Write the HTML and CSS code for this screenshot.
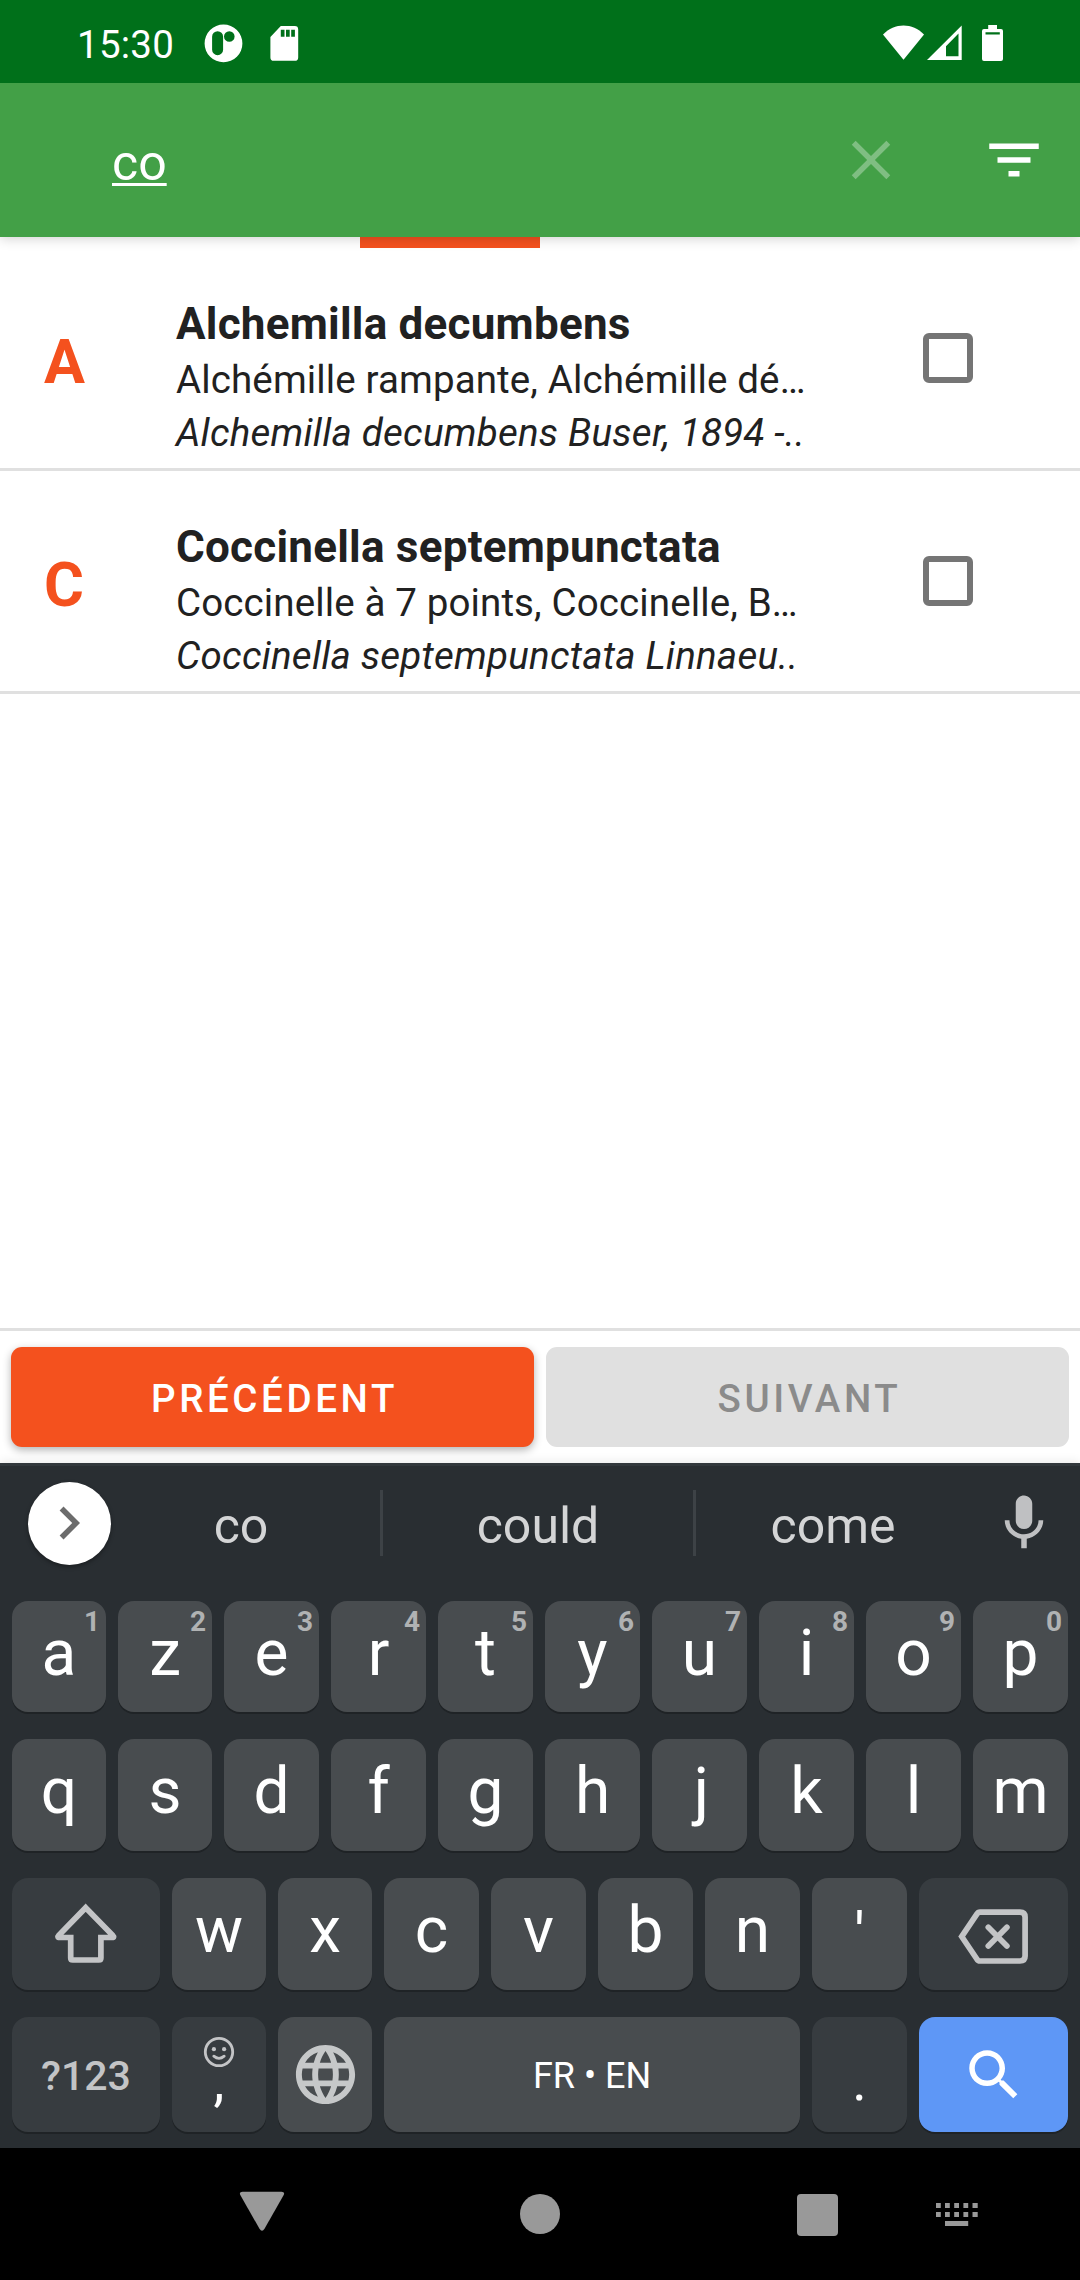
FILE: index.html
```html
<!DOCTYPE html>
<html lang="fr">
<head>
<meta charset="utf-8">
<title>Recherche de taxons</title>
<link rel="stylesheet" href="styles.css">
</head>
<body>
<div class="screen">
  <header class="status">
    <span class="clock">15:30</span>
    <svg class="status-left" width="100" height="40" viewBox="200 24 100 40" fill="#fff">
      <path fill-rule="evenodd" d="M223.5 24.5a18.9 18.9 0 1 0 0 37.8a18.9 18.9 0 0 0 0-37.8zM217.6 31.2a5.5 5.5 0 0 1 5.5 5.5v13a5.5 5.5 0 0 1-11 0v-13a5.5 5.5 0 0 1 5.5-5.5zM229.3 31.2a5.3 5.3 0 1 1 0 10.6a5.3 5.3 0 0 1 0-10.6z"/>
      <path fill-rule="evenodd" d="M280.8 26h14a3.400 3.400 0 0 1 3.400 3.400v28a3.400 3.400 0 0 1-3.400 3.400h-21a3.400 3.400 0 0 1-3.400-3.400v-20.500zM280.800 29.800v7h3.700v-7zM286 29.800v7h3.700v-7zM291.200 29.800v7h3.700v-7z"/>
    </svg>
    <svg class="status-right" width="124" height="40" viewBox="882 24 124 40" fill="#fff">
      <path d="M883 34.500C894.500 22.500 912.500 22.500 924 34.500L903.500 59.700z"/>
      <path fill-rule="evenodd" d="M961.700 25.500V60H927zM958.500 33.500L946 46.200V56.200H958.500z"/>
      <path fill-rule="evenodd" d="M988.200 25h8.800v4h4a2 2 0 0 1 2 2v28a2 2 0 0 1-2 2h-17a2 2 0 0 1-2-2V31a2 2 0 0 1 2-2h4.200zM985.500 32.300v2.200h14.300v-2.200z"/>
    </svg>
  </header>

  <div class="toolbar">
    <span class="query">co</span>
    <svg class="clear" width="66" height="66" viewBox="0 0 24 24"><path d="M19 6.410L17.590 5 12 10.590 6.410 5 5 6.410 10.590 12 5 17.590 6.410 19 12 13.410 17.590 19 19 17.590 13.410 12z"/></svg>
    <svg class="filter" width="66" height="66" viewBox="0 0 24 24"><path d="M10 18h4v-2h-4v2zM3 6v2h18V6H3zm3 7h12v-2H6v2z"/></svg>
  </div>

  <div class="progress"><div class="progress-bar"></div></div>

  <main class="list">
    <article class="item">
      <div class="initial">A</div>
      <div class="texts">
        <div class="name">Alchemilla decumbens</div>
        <div class="common">Alchémille rampante, Alchémille dé…</div>
        <div class="latin">Alchemilla decumbens Buser, 1894 -..</div>
      </div>
      <div class="check"></div>
    </article>
    <article class="item">
      <div class="initial">C</div>
      <div class="texts">
        <div class="name">Coccinella septempunctata</div>
        <div class="common">Coccinelle à 7 points, Coccinelle, B…</div>
        <div class="latin">Coccinella septempunctata Linnaeu..</div>
      </div>
      <div class="check"></div>
    </article>
  </main>

  <div class="actions">
    <div class="btn primary">PRÉCÉDENT</div>
    <div class="btn disabled">SUIVANT</div>
  </div>

  <section class="keyboard">
    <div class="suggestions">
      <div class="expand"><svg width="66" height="66" viewBox="0 0 24 24"><path d="M10 6L8.590 7.410 13.170 12l-4.580 4.590L10 18l6-6z"/></svg></div>
      <div class="word first">co</div>
      <div class="sep"></div>
      <div class="word">could</div>
      <div class="sep"></div>
      <div class="word">come</div>
      <svg class="mic" width="66" height="66" viewBox="0 0 24 24"><path d="M12 14.200c1.660 0 3-1.340 3-3V5c0-1.660-1.340-3-3-3S9 3.340 9 5v6.200c0 1.660 1.340 3 3 3zM17.300 11c0 3-2.540 5.100-5.300 5.100S6.700 14 6.700 11H5c0 3.410 2.720 6.230 6 6.720V21.200h2v-3.480c3.280-.48 6-3.300 6-6.720h-1.700z"/></svg>
    </div>
    <div class="row">
      <div class="key slim">a<span class="hint">1</span></div>
      <div class="key slim">z<span class="hint">2</span></div>
      <div class="key">e<span class="hint">3</span></div>
      <div class="key">r<span class="hint">4</span></div>
      <div class="key">t<span class="hint">5</span></div>
      <div class="key">y<span class="hint">6</span></div>
      <div class="key">u<span class="hint">7</span></div>
      <div class="key">i<span class="hint">8</span></div>
      <div class="key">o<span class="hint">9</span></div>
      <div class="key">p<span class="hint">0</span></div>
    </div>
    <div class="row">
      <div class="key slim">q</div><div class="key slim">s</div><div class="key">d</div><div class="key">f</div><div class="key">g</div><div class="key">h</div><div class="key nudge">j</div><div class="key">k</div><div class="key">l</div><div class="key">m</div>
    </div>
    <div class="row">
      <div class="key wide dark icon">
        <svg width="70" height="70" viewBox="51 1899 70 70" fill="none" stroke="#c3c4c6" stroke-width="5.700"><path d="M85.700 1907.700L112.600 1935.200Q114.800 1937.500 112 1937.500H100.900V1958Q100.900 1960 98.900 1960H72.700Q70.700 1960 70.700 1958V1937.500H59.600Q56.800 1937.500 58.900 1935.200Z"/></svg>
      </div>
      <div class="key slim">w</div><div class="key slim">x</div><div class="key">c</div><div class="key">v</div><div class="key">b</div><div class="key">n</div>
      <div class="key apos">'</div>
      <div class="key wider dark icon">
        <svg width="76" height="66" viewBox="955.500 1901 76 66" fill="none" stroke="#c3c4c6" stroke-width="5.700"><path d="M979.500 1912.200H1019.500Q1024.600 1912.200 1024.600 1917.200V1956Q1024.600 1961 1019.500 1961H979.500Q977.500 1961 976.300 1959L961.200 1936.600L976.300 1914.200Q977.500 1912.200 979.500 1912.200Z"/><path stroke-linecap="round" d="M987.800 1927.200L1006.400 1946M1006.400 1927.200L987.800 1946"/></svg>
      </div>
    </div>
    <div class="row last">
      <div class="key wide dark symbols">?123</div>
      <div class="key slim dark comma">
        <svg width="32" height="32" viewBox="0 0 32 32" fill="none" stroke="#c3c4c6" stroke-width="2.800"><circle cx="16" cy="16" r="13.700"/><path stroke-linecap="round" d="M10.800 20.200Q16 24.500 21.200 20.200"/><g fill="#c3c4c6" stroke="none"><circle cx="10.900" cy="13.200" r="2.100"/><circle cx="21.100" cy="13.200" r="2.100"/></g></svg>
        <span>,</span>
      </div>
      <div class="key slim icon"><svg width="71" height="71" viewBox="0 0 24 24" fill="#c6c8c9"><path d="M11.990 2C6.470 2 2 6.480 2 12s4.470 10 9.990 10C17.520 22 22 17.520 22 12S17.520 2 11.990 2zm6.930 6h-2.950c-.32-1.250-.78-2.450-1.380-3.560 1.840.63 3.370 1.910 4.330 3.560zM12 4.040c.83 1.200 1.480 2.530 1.910 3.960h-3.820c.43-1.430 1.080-2.760 1.910-3.960zM4.260 14C4.100 13.360 4 12.690 4 12s.1-1.360.26-2h3.380c-.08.66-.14 1.320-.14 2 0 .68.06 1.340.14 2H4.260zm.82 2h2.950c.32 1.250.78 2.450 1.380 3.560-1.840-.63-3.370-1.900-4.330-3.560zm2.950-8H5.080c.96-1.660 2.490-2.930 4.330-3.560C8.810 5.550 8.350 6.750 8.030 8zM12 19.960c-.83-1.200-1.480-2.530-1.910-3.960h3.820c-.43 1.430-1.080 2.760-1.910 3.960zM14.340 14H9.660c-.09-.66-.16-1.320-.16-2 0-.68.07-1.350.16-2h4.680c.09.65.16 1.320.16 2 0 .68-.07 1.340-.16 2zm.25 5.560c.6-1.110 1.060-2.310 1.380-3.560h2.950c-.96 1.650-2.490 2.930-4.330 3.560zM16.360 14c.08-.66.14-1.320.14-2 0-.68-.06-1.340-.14-2h3.380c.16.64.26 1.310.26 2s-.1 1.360-.26 2h-3.380z"/></svg></div>
      <div class="key space">FR • EN</div>
      <div class="key dark dot">.</div>
      <div class="key wider search icon"><svg width="66" height="66" viewBox="0 0 24 24" fill="#fff"><path d="M15.500 14h-.79l-.28-.27C15.410 12.590 16 11.110 16 9.500 16 5.910 13.090 3 9.500 3S3 5.910 3 9.500 5.910 16 9.500 16c1.610 0 3.090-.59 4.230-1.570l.27.28v.79l5 4.990L20.490 19l-4.990-5zm-6 0C7.010 14 5 11.990 5 9.500S7.010 5 9.500 5 14 7.010 14 9.500 11.990 14 9.500 14z"/></svg></div>
    </div>
  </section>

  <nav class="navbar">
    <svg class="back" width="46" height="40" viewBox="0 0 46 40"><path d="M3.500 .8H42.500Q46.200 .8 44.700 4L25.500 37.800Q23 41.600 20.500 37.800L1.300 4Q-.2 .8 3.500 .8Z"/></svg>
    <div class="home"></div>
    <div class="recent"></div>
    <svg class="ime" width="42" height="24" viewBox="0 0 42 24"><path d="M0 0h4.800v5H0zM9 0h4.800v5H9zM18.200 0H23v5h-4.800zM27.400 0h4.800v5h-4.800zM36.500 0h5.200v5h-5.200zM0 9h4.800v5H0zM9 9h4.800v5H9zM18.200 9H23v5h-4.800zM27.400 9h4.800v5h-4.800zM36.500 9h5.200v5h-5.200zM9 18h23.200v5H9z"/></svg>
  </nav>
</div>
</body>
</html>
```
FILE: styles.css
```css
* { box-sizing: border-box; }
body { margin: 0; font-family: Roboto, "Liberation Sans", sans-serif; }
svg { display: block; flex: none; }

.screen {
  width: 1080px;
  height: 2280px;
  display: flex;
  flex-direction: column;
  background: #fff;
  color: #212121;
}
.screen > * { flex: none; }

/* Status bar */
.status {
  height: 83px;
  background: #00701a;
  color: #fff;
  display: flex;
  align-items: flex-start;
  padding: 24px 74px 0 77px;
}
.clock { width: 123px; font-size: 38.5px; line-height: 42px; letter-spacing: .25px; }
.status-right { margin-left: auto; }

/* Search toolbar */
.toolbar {
  height: 154px;
  background: #43a047;
  color: #fff;
  display: flex;
  align-items: center;
  padding: 0 33px 0 112px;
  box-shadow: 0 1px 12px rgba(0, 0, 0, .2);
  clip-path: inset(0 0 -20px 0);
  position: relative;
  z-index: 1;
}
.query {
  flex: 1;
  font-size: 50px;
  line-height: 60px;
  padding-top: 6px;
  text-decoration: underline;
  text-decoration-thickness: 3px;
  text-underline-offset: 3px;
  text-decoration-skip-ink: none;
}
.clear { fill: rgba(255, 255, 255, .32); margin-right: 77px; }
.filter { fill: #fff; }

.progress { height: 11px; padding-left: 360px; }
.progress-bar { width: 180px; height: 11px; background: #f4511e; }

/* Results */
.screen > .list { flex: 1; }
.item {
  height: 223px;
  border-bottom: 3px solid #e0e0e0;
  display: flex;
  align-items: flex-start;
  padding-left: 44px;
}
.initial {
  width: 132px;
  padding-top: 79px;
  font-size: 61px;
  line-height: 70px;
  font-weight: 700;
  color: #f4511e;
}
.texts { width: 747px; padding-top: 48px; white-space: nowrap; }
.name { font-size: 44px; line-height: 56px; font-weight: 700; letter-spacing: .23px; margin-bottom: 1px; }
.common, .latin { font-size: 38.5px; line-height: 53px; letter-spacing: .13px; }
.latin { font-style: italic; letter-spacing: .24px; }
.check {
  width: 50px;
  height: 50px;
  margin-top: 85px;
  border: 6px solid #757575;
  border-radius: 6px;
}

/* Previous / next */
.actions {
  height: 135px;
  border-top: 3px solid #e0e0e0;
  padding: 16px 11px;
  display: flex;
  gap: 12px;
}
.btn {
  flex: 1;
  height: 100px;
  border-radius: 11px;
  padding: 3px 0 0 4px;
  text-align: center;
  font-size: 38.5px;
  line-height: 98px;
  font-weight: 500;
  letter-spacing: 3.6px;
}
.primary { background: #f4511e; color: #fff; box-shadow: 0 3px 8px rgba(0, 0, 0, .3); }
.disabled { background: #e0e0e0; color: #8b8b8b; }

/* Keyboard */
.keyboard {
  height: 685px;
  background: #292e32;
  border-top: 3px solid #32383c;
  box-shadow: 0 -2px 9px rgba(0, 0, 0, .08);
}
.suggestions {
  height: 114px;
  margin-bottom: 21px;
  display: grid;
  grid-template-columns: 111px 269px 3px 310px 3px 274px 110px;
  align-items: center;
}
.expand {
  width: 83px;
  height: 83px;
  margin-left: 28px;
  border-radius: 50%;
  background: #fff;
  box-shadow: 0 2px 4px rgba(0, 0, 0, .35);
  display: flex;
  align-items: center;
  justify-content: center;
}
.expand svg { fill: #6c6c6c; margin-right: 1px; }
.word { font-size: 50px; line-height: 60px; padding-top: 5px; text-align: center; color: #d4d5d6; }
.word.first { padding-right: 9px; }
.sep { height: 66px; background: #3d4246; }
.mic { fill: #bfc0c2; margin-left: 21px; }

.row {
  display: flex;
  gap: 12px;
  padding: 0 12px;
  margin-bottom: 27px;
}
.key {
  position: relative;
  width: 95px;
  height: 112px;
  flex: none;
  border-radius: 16px;
  background: #484c4f;
  box-shadow: 0 2px 0 #1f2326;
  color: #fff;
  font-size: 64px;
  line-height: 106px;
  text-align: center;
}
.row:nth-child(2) .key { height: 111px; }
.slim { width: 94px; }
.wide { width: 148px; }
.wider { width: 149px; }
.nudge { padding-left: 4px; }
.dark { background: #373c40; }
.hint {
  position: absolute;
  top: 5px;
  right: 6px;
  font-size: 28px;
  line-height: 32px;
  font-weight: 700;
  color: #b0b2b3;
}
.icon { display: flex; align-items: center; justify-content: center; }
.apos { font-size: 60px; line-height: 114px; }
.last { margin: 0; }
.last .key { height: 115px; }
.symbols { font-size: 41px; line-height: 119px; font-weight: 500; color: #c3c4c6; }
.comma {
  display: flex;
  flex-direction: column;
  align-items: center;
  padding-top: 19px;
  font-size: 55px;
}
.comma span { line-height: 26px; }
.space { width: 416px; font-size: 36px; line-height: 118px; }
.dot { font-size: 55px; line-height: 128px; }
.search { background: #5e97f6; }

/* System navigation */
.navbar {
  height: 132px;
  background: #000;
  display: flex;
  align-items: flex-start;
  padding: 43px 0 0 238.5px;
}
.navbar svg { fill: #999; }
.home { width: 40px; height: 40px; border-radius: 50%; background: #999; margin: 3px 0 0 235.5px; }
.recent { width: 41px; height: 42px; border-radius: 4px; background: #999; margin: 3px 0 0 237px; }
.ime { margin: 12px 0 0 98px; }
```
